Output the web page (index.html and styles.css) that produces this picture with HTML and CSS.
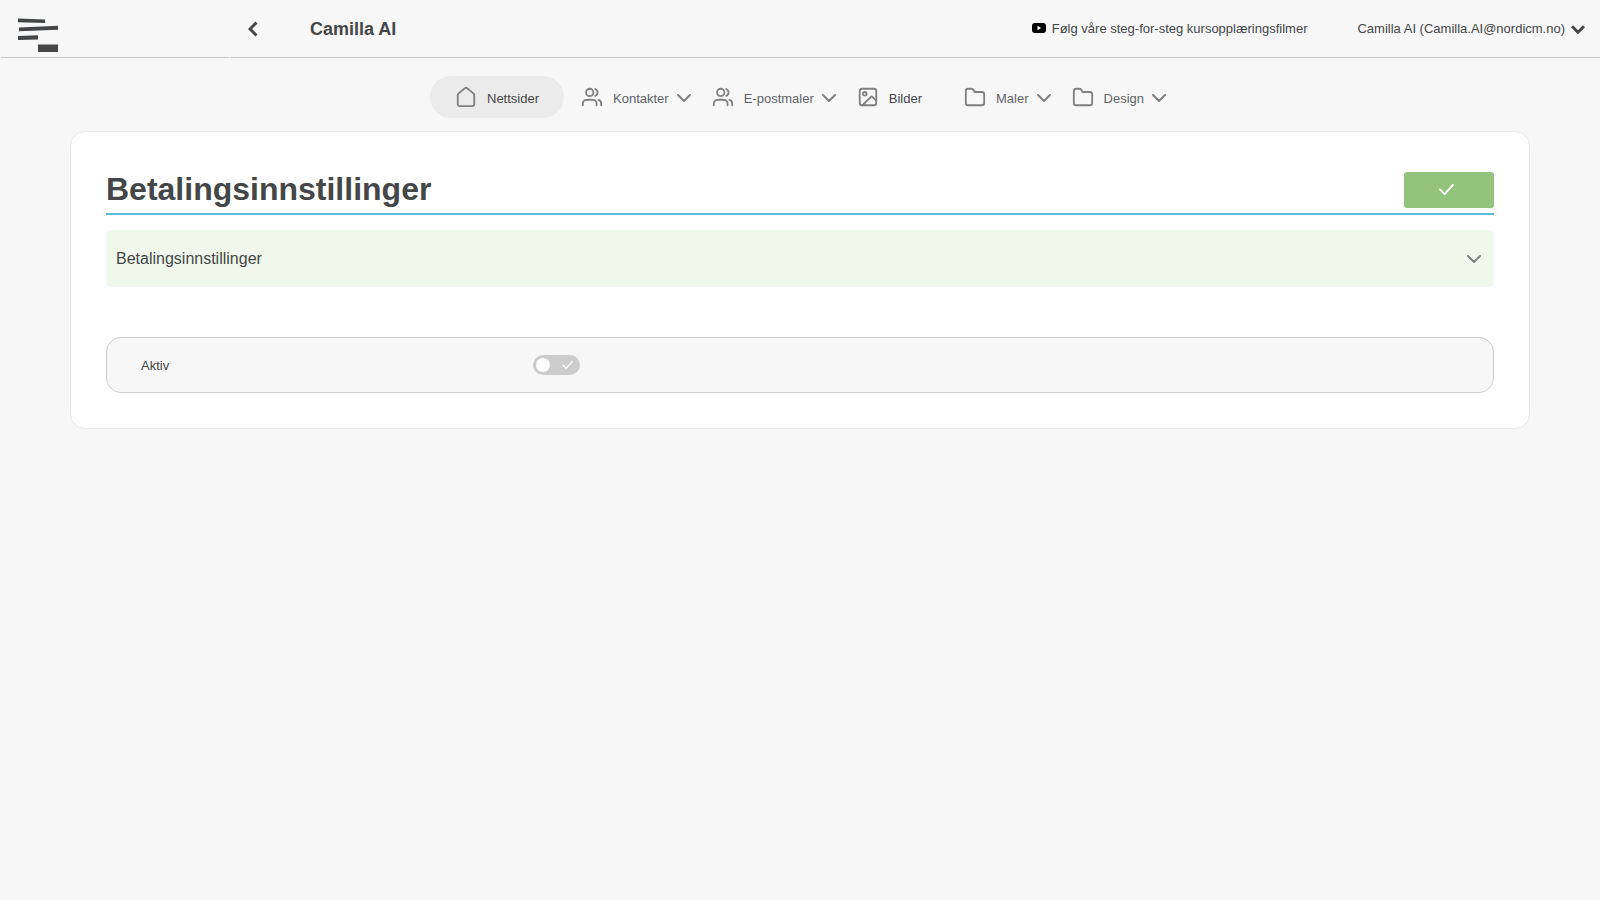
FILE: index.html
```html
<!DOCTYPE html>
<html lang="no">
  <head>
    <meta charset="UTF-8" />
    <meta name="viewport" content="width=device-width, initial-scale=1.0" />
    <title>Betalingsinnstillinger</title>
    <link rel="stylesheet" href="styles.css">
  </head>
  <body>
    <!-- Shared icons -->
    <svg class="sprite" aria-hidden="true">
      <symbol id="icon-users" viewBox="0 0 24 24">
        <path d="M22 21V19C22 17.136 20.725 15.57 19 15.126M15.5 3.29C16.966 3.884 18 5.321 18 7C18 8.679 16.966 10.116 15.5 10.71M17 21C17 19.136 17 18.204 16.695 17.469C16.29 16.489 15.511 15.71 14.531 15.304C13.796 15 12.864 15 11 15H8C6.136 15 5.204 15 4.469 15.304C3.489 15.71 2.71 16.489 2.304 17.469C2 18.204 2 19.136 2 21M13.5 7C13.5 9.209 11.709 11 9.5 11C7.291 11 5.5 9.209 5.5 7C5.5 4.791 7.291 3 9.5 3C11.709 3 13.5 4.791 13.5 7Z" />
      </symbol>
      <symbol id="icon-folder" viewBox="0 0 24 24">
        <path d="M11.5 6.5L10.2 4.2C9.5 3.2 9 3 8 3H4.5C3 3 2 4 2 5.5V18.5C2 20.2 2.8 21 4.5 21H19.5C21.2 21 22 20.2 22 18.5V9C22 7.3 21.2 6.5 19.5 6.5H11.5Z" />
      </symbol>
      <symbol id="icon-down" viewBox="0 0 14 8">
        <path d="M1 1l6 6 6-6" />
      </symbol>
      <symbol id="icon-check" viewBox="0 0 16 12">
        <path d="M1 6l5 5L15 1" />
      </symbol>
    </svg>

    <header class="topbar">
      <div class="topbar-brand">
        <a href="#" class="logo" aria-label="Hjem">
          <svg width="40" height="34" viewBox="0 0 40 34">
            <path d="M0 0.6L27 1.4V5L0 4.2ZM1 9.6L40 7.8V11.8L1 13.2ZM0 18L20 17.2V21.4L0 22ZM20 26.6H40V34H20Z" />
          </svg>
        </a>
      </div>
      <div class="topbar-main">
        <button type="button" class="back" aria-label="Tilbake">
          <svg width="10" height="16" viewBox="0 0 10 16"><path d="M8.5 1.5L2 8l6.5 6.5" /></svg>
        </button>
        <strong class="site-name">Camilla AI</strong>
        <a href="#" class="course-link">
          <svg width="14" height="12" viewBox="0 0 14 12">
            <rect width="14" height="10" rx="3" />
            <path d="M5.5 2.8v4.4L9.2 5z" fill="#fff" />
          </svg>
          Følg våre steg-for-steg kursopplæringsfilmer
        </a>
        <button type="button" class="account">
          Camilla AI (Camilla.AI@nordicm.no)
          <svg width="14" height="10" viewBox="0 0 14 10"><path d="M1 2.2L7 8.2 13 2.2" /></svg>
        </button>
      </div>
    </header>

    <nav class="menu">
      <a href="#" class="menu-item active">
        <svg class="icon" viewBox="0 0 24 24">
          <path d="M3 10.6C3 9.8 3 9.4 3.2 9C3.4 8.6 3.7 8.3 4.3 7.8L10.4 2.8C11.2 2.2 11.5 1.9 12 1.9C12.5 1.9 12.8 2.2 13.6 2.8L19.7 7.8C20.3 8.3 20.6 8.6 20.8 9C21 9.4 21 9.8 21 10.6V18.8C21 19.9 21 20.5 20.8 20.9C20.6 21.3 20.3 21.6 19.9 21.8C19.5 22 18.9 22 17.8 22H6.2C5.1 22 4.5 22 4.1 21.8C3.7 21.6 3.4 21.3 3.2 20.9C3 20.5 3 19.9 3 18.8Z" />
        </svg>
        Nettsider
      </a>
      <button type="button" class="menu-item">
        <svg class="icon"><use href="#icon-users" /></svg>
        Kontakter
        <svg class="arrow"><use href="#icon-down" /></svg>
      </button>
      <button type="button" class="menu-item">
        <svg class="icon"><use href="#icon-users" /></svg>
        E-postmaler
        <svg class="arrow"><use href="#icon-down" /></svg>
      </button>
      <a href="#" class="menu-item single">
        <svg class="icon" viewBox="0 0 24 24">
          <rect x="3" y="3" width="18" height="18" rx="2.5" />
          <circle cx="8.5" cy="8.5" r="2" />
          <path d="M6 21L15.2 11.8C15.7 11.3 16.3 11.3 16.8 11.8L21 16" />
        </svg>
        Bilder
      </a>
      <button type="button" class="menu-item">
        <svg class="icon"><use href="#icon-folder" /></svg>
        Maler
        <svg class="arrow"><use href="#icon-down" /></svg>
      </button>
      <button type="button" class="menu-item">
        <svg class="icon"><use href="#icon-folder" /></svg>
        Design
        <svg class="arrow"><use href="#icon-down" /></svg>
      </button>
    </nav>

    <main class="card">
      <div class="card-head">
        <h1>Betalingsinnstillinger</h1>
        <button type="submit" class="save" aria-label="Lagre">
          <svg width="15" height="11"><use href="#icon-check" /></svg>
        </button>
      </div>

      <button type="button" class="panel">
        Betalingsinnstillinger
        <svg class="arrow"><use href="#icon-down" /></svg>
      </button>

      <div class="setting">
        <label for="active">Aktiv</label>
        <span class="switch">
          <input type="checkbox" id="active" />
          <svg width="11" height="8"><use href="#icon-check" /></svg>
        </span>
      </div>
    </main>
  </body>
</html>
```
FILE: styles.css
```css
* {
  box-sizing: border-box;
}

body {
  margin: 0;
  background: #f7f7f7;
  color: #444648;
  font-family: "Liberation Sans", Arial, sans-serif;
  font-size: 13px;
}

a {
  color: inherit;
  text-decoration: none;
}

button {
  padding: 0;
  border: none;
  background: none;
  color: inherit;
  font: inherit;
  cursor: pointer;
}

svg {
  flex-shrink: 0;
  fill: none;
  stroke-linecap: round;
  stroke-linejoin: round;
}

.sprite {
  display: none;
}

/* Top bar */
.topbar {
  display: flex;
  gap: 1px;
  height: 58px;
  padding-left: 1px;
}

.topbar-brand,
.topbar-main {
  display: flex;
  align-items: center;
  border-bottom: 1px solid #c8c8c8;
}

.topbar-brand {
  width: 228px;
  padding: 12px 0 0 17px;
}

.logo svg {
  display: block;
  fill: #444648;
}

.topbar-main {
  flex: 1;
  padding: 0 15px 0 18px;
}

.back {
  display: flex;
}

.back svg,
.account svg {
  stroke: #444648;
  stroke-width: 3;
  stroke-linecap: butt;
  stroke-linejoin: miter;
}

.site-name {
  margin-left: 52px;
  padding-top: 2px;
  font-size: 18px;
}

.course-link {
  display: flex;
  align-items: center;
  gap: 6px;
  margin-left: auto;
}

.course-link svg {
  fill: #000;
}

.account {
  display: flex;
  align-items: center;
  gap: 6px;
  margin-left: 50px;
}

/* Menu */
.menu {
  display: flex;
  justify-content: center;
  gap: 5px;
  margin: 18px 0 13px;
}

.menu-item {
  display: flex;
  align-items: center;
  height: 42px;
  padding: 2px 4px 0 12px;
  color: #5f6368;
}

.icon {
  width: 22px;
  height: 22px;
  margin: 0 10px 2px 0;
  stroke: #808080;
  stroke-width: 2;
}

.arrow {
  width: 14px;
  height: 8px;
  margin-left: 8px;
  stroke: #808080;
  stroke-width: 2;
}

.menu-item.active,
.menu-item.single {
  padding-right: 25px;
  color: #444648;
}

.menu-item.active {
  padding-left: 25px;
  border-radius: 21px;
  background: #ebebeb;
}

/* Content card */
.card {
  margin: 0 70px;
  padding: 35px;
  border: 1px solid #e8e8ec;
  border-radius: 15px;
  background: #fff;
}

.card-head {
  display: flex;
  align-items: flex-start;
  justify-content: space-between;
  padding: 5px 0;
  border-bottom: 2px solid #5bbcd9;
}

h1 {
  margin: 0;
  font-size: 32px;
  line-height: 34px;
}

.save {
  display: flex;
  align-items: center;
  justify-content: center;
  width: 90px;
  height: 36px;
  padding: 0 5px 2px 0;
  border-radius: 3px;
  background: #93c47d;
}

.save svg {
  stroke: #fff;
  stroke-width: 2;
}

.panel {
  display: flex;
  align-items: center;
  justify-content: space-between;
  width: 100%;
  height: 57px;
  margin: 15px 0 50px;
  padding: 0 13px 0 10px;
  border-radius: 5px;
  background: #f0f8eb;
  font-size: 16px;
}

.setting {
  display: grid;
  grid-template-columns: 392px 1fr;
  align-items: center;
  height: 56px;
  padding: 0 34px;
  border: 1px solid #ccc;
  border-radius: 15px;
  background: #f7f7f7;
}

/* Switch */
.switch {
  display: flex;
  align-items: center;
  position: relative;
  width: 47px;
}

.switch input {
  display: flex;
  align-items: center;
  width: 47px;
  height: 20px;
  margin: 0;
  padding: 0 3px;
  border-radius: 10px;
  background: #ccc;
  appearance: none;
  cursor: pointer;
}

.switch input::before {
  content: "";
  width: 14px;
  height: 14px;
  border-radius: 50%;
  background: #fff;
}

.switch input:checked {
  justify-content: flex-end;
  background: #93c47d;
}

.switch svg {
  position: absolute;
  right: 7px;
  stroke: #fff;
  stroke-width: 2;
  pointer-events: none;
}
```
